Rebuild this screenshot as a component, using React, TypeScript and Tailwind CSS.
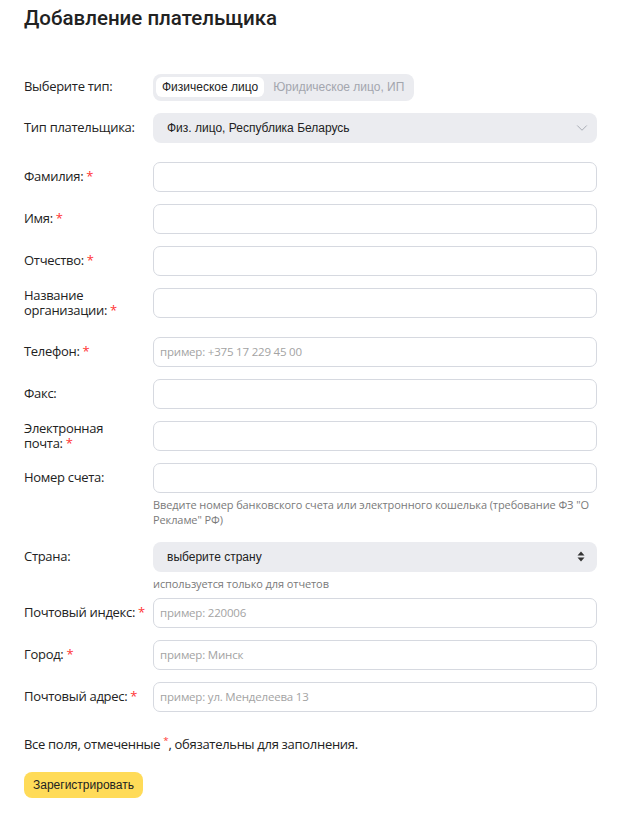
import { ChevronDown } from 'lucide-react';

type Field = {
  label: string;
  required?: boolean;
  placeholder?: string;
};

const sans = "font-['Open_Sans',sans-serif]";
const arial = "font-['Liberation_Sans',Arial,sans-serif]";

function Star() {
  return <span className="ml-[3px] text-[#f33]">*</span>;
}

function Row({ label, required, children, className = '' }: { label: string; required?: boolean; children: React.ReactNode; className?: string }) {
  return (
    <div className={`flex items-center ${className}`}>
      <div className={`w-[129px] shrink-0 text-[13px] leading-[15px] tracking-[-0.3px] text-[#222] ${sans}`}>
        {label}
        {required && <Star />}
      </div>
      <div className="flex-1">{children}</div>
    </div>
  );
}

function TextInput({ placeholder }: { placeholder?: string }) {
  return (
    <input
      type="text"
      placeholder={placeholder}
      className={`block h-[30px] w-full rounded-[7px] border border-[#d6d9e0] bg-white px-[6px] text-[11.5px] tracking-[-0.2px] text-[#222] outline-none placeholder:text-[#a3a3a3] ${sans}`}
    />
  );
}

function Hint({ children }: { children: React.ReactNode }) {
  return <div className={`ml-[129px] mt-[4px] text-[11px] leading-[15px] tracking-[-0.1px] text-[#7a7a7a] ${sans}`}>{children}</div>;
}

const personFields: Field[] = [
  { label: 'Фамилия:', required: true },
  { label: 'Имя:', required: true },
  { label: 'Отчество:', required: true },
  { label: 'Название организации:', required: true },
];

const contactFields: Field[] = [
  { label: 'Телефон:', required: true, placeholder: 'пример: +375 17 229 45 00' },
  { label: 'Факс:' },
  { label: 'Электронная почта:', required: true },
];

const addressFields: Field[] = [
  { label: 'Почтовый индекс:', required: true, placeholder: 'пример: 220006' },
  { label: 'Город:', required: true, placeholder: 'пример: Минск' },
  { label: 'Почтовый адрес:', required: true, placeholder: 'пример: ул. Менделеева 13' },
];

export default function App() {
  return (
    <div className="min-h-[813px] w-[624px] bg-white pl-6 pr-[27px] pt-[4px]">
      <h1 className="text-[20.5px] font-medium leading-[28px] text-[#222] font-['Roboto',Arial,sans-serif]">
        Добавление плательщика
      </h1>

      {/* payer kind switch */}
      <Row label="Выберите тип:" className="mt-[41px]">
        <div className="inline-flex h-[27px] items-center gap-[2px] rounded-[8px] bg-[#ebecf0] p-[3px]">
          <button className={`h-[20px] rounded-[6px] bg-white px-[6px] text-[12px] text-[#222] ${arial}`}>
            Физическое лицо
          </button>
          <button className={`h-[20px] rounded-[6px] px-[7px] text-[12px] text-[#a3a6ae] ${arial}`}>
            Юридическое лицо, ИП
          </button>
        </div>
      </Row>

      <Row label="Тип плательщика:" className="mt-[12px]">
        <div className={`flex h-[30px] items-center justify-between rounded-[8px] bg-[#ebecf0] pl-[14px] pr-[6px] text-[12px] text-[#222] ${arial}`}>
          <span>Физ. лицо, Республика Беларусь</span>
          <ChevronDown className="h-[18px] w-[18px] text-[#a7abb3]" strokeWidth={1.3} />
        </div>
      </Row>

      <div className="mt-[19px] flex flex-col gap-[12px]">
        {personFields.map((f) => (
          <Row key={f.label} label={f.label} required={f.required}>
            <TextInput placeholder={f.placeholder} />
          </Row>
        ))}
      </div>

      <div className="mt-[19px] flex flex-col gap-[12px]">
        {contactFields.map((f) => (
          <Row key={f.label} label={f.label} required={f.required}>
            <TextInput placeholder={f.placeholder} />
          </Row>
        ))}
        <div>
          <Row label="Номер счета:">
            <TextInput />
          </Row>
          <Hint>Введите номер банковского счета или электронного кошелька (требование ФЗ "О Рекламе" РФ)</Hint>
        </div>
      </div>

      <div className="mt-[15px]">
        <Row label="Страна:">
          <div className={`flex h-[30px] items-center justify-between rounded-[8px] bg-[#ebecf0] pl-[14px] pr-[12px] text-[12px] text-[#222] ${arial}`}>
            <span>выберите страну</span>
            <svg width="8" height="11" viewBox="0 0 8 11" className="text-[#333]">
              <path d="M4 0.5 L7.5 4.5 H0.5 Z" fill="currentColor" />
              <path d="M4 10.5 L7.5 6.5 H0.5 Z" fill="currentColor" />
            </svg>
          </div>
        </Row>
        <Hint>используется только для отчетов</Hint>
      </div>

      <div className="mt-[7px] flex flex-col gap-[12px]">
        {addressFields.map((f) => (
          <Row key={f.label} label={f.label} required={f.required}>
            <TextInput placeholder={f.placeholder} />
          </Row>
        ))}
      </div>

      <p className={`mt-[23px] text-[13px] leading-[18px] tracking-[-0.3px] text-[#222] ${sans}`}>
        Все поля, отмеченные <sup className="text-[#f33]">*</sup>, обязательны для заполнения.
      </p>

      <button className={`mt-[19px] h-[26px] rounded-[8px] bg-[#ffdb58] px-[9px] text-[12px] text-[#222] ${arial}`}>
        Зарегистрировать
      </button>
    </div>
  );
}
